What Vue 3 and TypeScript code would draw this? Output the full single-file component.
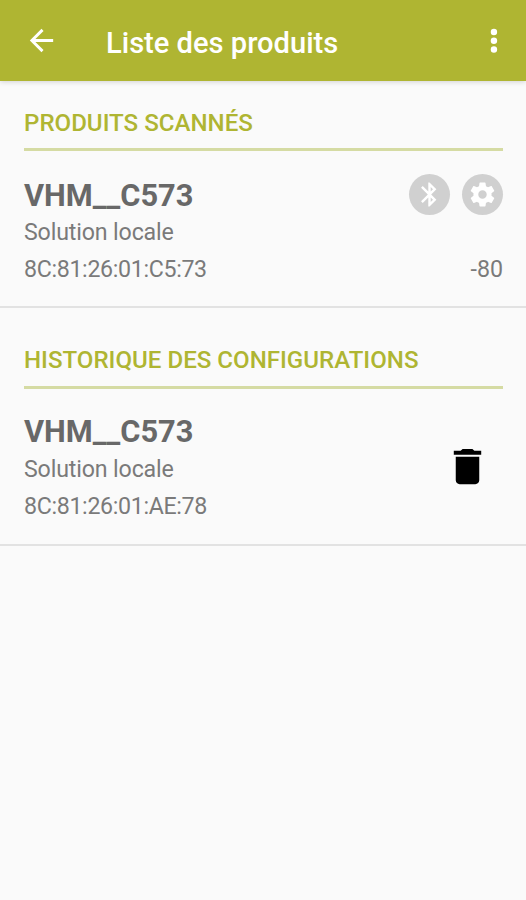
<script setup lang="ts">
interface Product {
  name: string
  solution: string
  address: string
  rssi?: number
}

interface Section {
  title: string
  scanned: boolean
  products: Product[]
}

const sections: Section[] = [
  {
    title: 'PRODUITS SCANNÉS',
    scanned: true,
    products: [
      { name: 'VHM__C573', solution: 'Solution locale', address: '8C:81:26:01:C5:73', rssi: -80 },
    ],
  },
  {
    title: 'HISTORIQUE DES CONFIGURATIONS',
    scanned: false,
    products: [
      { name: 'VHM__C573', solution: 'Solution locale', address: '8C:81:26:01:AE:78' },
    ],
  },
]
</script>

<template>
  <div class="screen">
    <header class="app-bar">
      <button class="bar-button" aria-label="Retour">
        <svg viewBox="0 0 24 24"><path d="M20 11H7.83l5.59-5.59L12 4l-8 8 8 8 1.41-1.41L7.83 13H20v-2z" /></svg>
      </button>
      <h1>Liste des produits</h1>
      <button class="bar-button" aria-label="Menu">
        <svg viewBox="0 0 24 24"><circle cx="12.3" cy="6.2" r="2.2" /><circle cx="12.3" cy="12.2" r="2.2" /><circle cx="12.3" cy="18.2" r="2.2" /></svg>
      </button>
    </header>

    <main>
      <section v-for="section in sections" :key="section.title" class="section">
        <h2>{{ section.title }}</h2>
        <article v-for="product in section.products" :key="product.address" class="product">
          <div class="details">
            <h3>{{ product.name }}</h3>
            <p class="solution">{{ product.solution }}</p>
            <p class="address">{{ product.address }}</p>
          </div>
          <div v-if="section.scanned" class="status">
            <div class="badges">
              <span class="badge">
                <svg viewBox="0 0 24 24"><path d="M17.71 7.71L12 2h-1v7.59L6.41 5 5 6.41 10.59 12 5 17.59 6.41 19 11 14.41V22h1l5.71-5.71-4.3-4.29 4.3-4.29zM13 5.83l1.88 1.88L13 9.59V5.83zm1.88 10.46L13 18.17v-3.76l1.88 1.88z" /></svg>
              </span>
              <span class="badge">
                <svg viewBox="0 0 24 24"><path d="M19.43 12.98c.04-.32.07-.64.07-.98s-.03-.66-.07-.98l2.11-1.65c.19-.15.24-.42.12-.64l-2-3.46c-.12-.22-.39-.3-.61-.22l-2.49 1c-.52-.4-1.08-.73-1.69-.98l-.38-2.65C14.46 2.18 14.25 2 14 2h-4c-.25 0-.46.18-.49.42l-.38 2.65c-.61.25-1.17.59-1.69.98l-2.49-1c-.23-.09-.49 0-.61.22l-2 3.46c-.13.22-.07.49.12.64l2.11 1.65c-.04.32-.07.65-.07.98s.03.66.07.98l-2.11 1.65c-.19.15-.24.42-.12.64l2 3.46c.12.22.39.3.61.22l2.49-1c.52.4 1.08.73 1.69.98l.38 2.65c.03.24.24.42.49.42h4c.25 0 .46-.18.49-.42l.38-2.65c.61-.25 1.17-.59 1.69-.98l2.49 1c.23.09.49 0 .61-.22l2-3.46c.12-.22.07-.49-.12-.64l-2.11-1.65zM12 15.5c-1.93 0-3.5-1.57-3.5-3.5s1.57-3.5 3.5-3.5 3.5 1.57 3.5 3.5-1.57 3.5-3.5 3.5z" /></svg>
              </span>
            </div>
            <span class="rssi">{{ product.rssi }}</span>
          </div>
          <button v-else class="delete" aria-label="Supprimer">
            <svg viewBox="0 0 24 24"><path d="M6 19c0 1.1.9 2 2 2h8c1.1 0 2-.9 2-2V7H6v12zM19 4h-3.5l-1-1h-5l-1 1H5v2h14V4z" /></svg>
          </button>
        </article>
      </section>
    </main>
  </div>
</template>

<style>
body {
  background: #fafafa;
}
</style>

<style scoped>
.screen {
  min-height: 900px;
  background: #fafafa;
  color: #7a7a7a;
  font-family: Roboto, sans-serif;
}

h1,
h2,
h3,
p {
  margin: 0;
}

button {
  display: flex;
  padding: 0;
  border: 0;
  background: none;
  color: inherit;
}

svg {
  display: block;
  fill: currentColor;
}

.app-bar {
  display: flex;
  align-items: center;
  height: 81px;
  padding: 0 15px 0 24px;
  box-sizing: border-box;
  background: #afb532;
  color: #fff;
  box-shadow: 0 1px 5px rgba(0, 0, 0, 0.16);
}

.bar-button svg {
  width: 35px;
  height: 35px;
}

h1 {
  flex: 1;
  margin-left: 47px;
  padding-top: 4px;
  font-size: 29.1px;
  line-height: 34px;
  font-weight: 500;
}

.section {
  height: 238px;
  padding: 0 23px 0 24px;
  box-sizing: border-box;
  border-bottom: 2px solid #e2e2e2;
}

.section:first-child {
  height: 227px;
}

.section:first-child h2 {
  padding-top: 28px;
  padding-bottom: 11px;
}

h2 {
  padding-top: 38px;
  padding-bottom: 12px;
  border-bottom: 3px solid #d5dba3;
  color: #afb532;
  font-size: 24.1px;
  line-height: 28px;
  font-weight: 500;
}

.product {
  display: flex;
  justify-content: space-between;
}

.details {
  padding-top: 24px;
}

.section:first-child .details {
  padding-top: 26px;
}

.section:first-child h3 {
  line-height: 37px;
}

h3 {
  color: #686868;
  font-size: 30.8px;
  line-height: 38px;
  font-weight: 700;
}

p,
.rssi {
  font-size: 23.2px;
  line-height: 37px;
  font-weight: 400;
}

.solution {
  letter-spacing: -0.15px;
}

.address {
  letter-spacing: -0.34px;
}

.status {
  display: flex;
  flex-direction: column;
  align-items: flex-end;
  justify-content: space-between;
  padding-top: 23px;
}

.badges {
  display: flex;
  gap: 12px;
}

.badge {
  display: grid;
  place-items: center;
  width: 41px;
  height: 41px;
  border-radius: 50%;
  background: #d0d0d0;
  color: #fff;
}

.badge svg {
  width: 29px;
  height: 29px;
}

.delete {
  align-self: flex-start;
  margin-top: 54px;
  margin-right: 12px;
  color: #000;
}

.delete svg {
  width: 47px;
  height: 47px;
}
</style>
